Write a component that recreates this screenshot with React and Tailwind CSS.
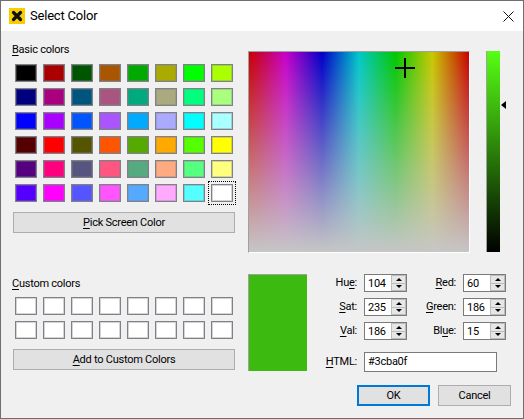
import React from 'react';

const basicColors = [
  '#000000', '#aa0000', '#005500', '#aa5500', '#00aa00', '#aaaa00', '#00ff00', '#aaff00',
  '#00007f', '#aa007f', '#00557f', '#aa557f', '#00aa7f', '#aaaa7f', '#00ff7f', '#aaff7f',
  '#0000ff', '#aa00ff', '#0055ff', '#aa55ff', '#00aaff', '#aaaaff', '#00ffff', '#aaffff',
  '#550000', '#ff0000', '#555500', '#ff5500', '#55aa00', '#ffaa00', '#55ff00', '#ffff00',
  '#55007f', '#ff007f', '#55557f', '#ff557f', '#55aa7f', '#ffaa7f', '#55ff7f', '#ffff7f',
  '#5500ff', '#ff00ff', '#5555ff', '#ff55ff', '#55aaff', '#ffaaff', '#55ffff', '#ffffff',
];

function Swatch({ color, focused }) {
  return (
    <div className={`w-[22px] h-[18px] border border-[#808088] shadow-[inset_0_0_0_1px_rgba(128,128,136,0.35)] ${focused ? 'outline-dotted outline-1 outline-offset-[2px] outline-black' : ''}`} style={{ backgroundColor: color }} />
  );
}

function Mnemonic({ first, rest, before = '' }) {
  return <span>{before}<span className="underline underline-offset-2">{first}</span>{rest}</span>;
}

function PushButton({ children, className = '' }) {
  return (
    <div className={`h-[21px] pt-[1px] flex items-center justify-center bg-[#e1e1e1] border ${className}`}>
      {children}
    </div>
  );
}

function Spin({ value }) {
  return (
    <div className="w-[43px] h-[18px] bg-white border border-[#7a7a7a] flex items-center">
      <span className="flex-1 pl-[3px] leading-none">{value}</span>
      <div className="w-[15px] h-[16px] flex flex-col">
        <div className="flex-1 flex items-center justify-center bg-[#e6e6e6] border border-[#bcbcbc]">
          <div className="w-0 h-0 border-x-[3px] border-x-transparent border-b-[3px] border-b-black" />
        </div>
        <div className="flex-1 flex items-center justify-center bg-[#e6e6e6] border border-t-0 border-[#bcbcbc]">
          <div className="w-0 h-0 border-x-[3px] border-x-transparent border-t-[3px] border-t-black" />
        </div>
      </div>
    </div>
  );
}

function Field({ label, value, width }) {
  return (
    <div className="flex items-center h-[18px] gap-[7px]">
      <div className={`${width} text-right`}>{label}</div>
      <Spin value={value} />
    </div>
  );
}

export default function App() {
  return (
    <div className="w-[524px] h-[419px] bg-[#f0f0f0] border border-[#6f6f6f] flex flex-col text-[11px] tracking-[-0.25px] text-black font-['Roboto',sans-serif]">
      {/* title bar */}
      <div className="h-[30px] bg-white flex items-center pl-[8px] pr-[9px] shrink-0">
        <svg width="16" height="16" viewBox="0 0 16 16" className="shrink-0">
          <rect width="16" height="16" fill="#f7cf00" />
          <path d="M4.5 4.5 L11.5 11.5 M11.5 4.5 L4.5 11.5" stroke="#111" strokeWidth="3.2" strokeLinecap="round" />
        </svg>
        <span className="ml-[5px] text-[13px] tracking-[-0.2px]">Select Color</span>
        <svg width="11" height="11" viewBox="0 0 11 11" className="ml-auto">
          <path d="M0.5 0.5 L10.5 10.5 M10.5 0.5 L0.5 10.5" stroke="#111" strokeWidth="1" fill="none" />
        </svg>
      </div>

      <div className="flex-1 flex pl-[11px] min-h-0">
        {/* left column */}
        <div className="w-[223px] shrink-0 flex flex-col">
          <div className="h-[17px] mt-[10px] leading-[17px]"><Mnemonic first="B" rest="asic colors" /></div>
          <div className="grid grid-cols-[repeat(8,22px)] auto-rows-[18px] gap-[6px] ml-[3px] mt-[6px]">
            {basicColors.map((c, i) => <Swatch key={i} color={c} focused={i === 47} />)}
          </div>
          <PushButton className="ml-[1px] mt-[10px] border-[#adadad]"><Mnemonic first="P" rest="ick Screen Color" /></PushButton>

          <div className="h-[17px] mt-[42px] leading-[17px]"><Mnemonic first="C" rest="ustom colors" /></div>
          <div className="grid grid-cols-[repeat(8,22px)] auto-rows-[18px] gap-[6px] ml-[3px] mt-[5px]">
            {Array.from({ length: 16 }).map((_, i) => <Swatch key={i} color="#ffffff" />)}
          </div>
          <PushButton className="ml-[1px] mt-[10px] border-[#adadad]"><Mnemonic first="A" rest="dd to Custom Colors" /></PushButton>
        </div>

        {/* right column */}
        <div className="flex-1 ml-[13px] flex flex-col">
          <div className="flex mt-[20px]">
            <div className="relative w-[222px] h-[202px] border-t border-l border-t-[#a0a0a0] border-l-[#a0a0a0] border-r border-b border-r-white border-b-white bg-[linear-gradient(to_bottom,rgba(198,198,198,0),#c6c6c6),linear-gradient(to_right,#c80000,#c800c8,#0000c8,#00c8c8,#00c800,#c8c800,#c80000)]">
              <div className="absolute left-[146px] top-[15px] w-[20px] h-[2px] bg-black" />
              <div className="absolute left-[155px] top-[6px] w-[2px] h-[20px] bg-black" />
            </div>
            <div className="relative ml-[16px] w-[14px] h-[201px] border-l border-l-[#a0a0a0] bg-[linear-gradient(to_bottom,#56ff14,#000000)]">
              <div className="absolute left-[14px] top-[50px] w-0 h-0 border-y-[4px] border-y-transparent border-r-[5px] border-r-black" />
            </div>
          </div>

          <div className="flex mt-[21px]">
            <div className="w-[59px] h-[97px] bg-[#3cba0f] border-t border-l border-t-[#a0a0a0] border-l-[#a0a0a0]" />
            <div className="flex flex-col ml-[12px]">
              <div className="grid grid-cols-[auto_auto] gap-x-[13px] gap-y-[6px] justify-start">
                <Field label={<Mnemonic before="Hu" first="e" rest=":" />} value="104" width="w-[38px]" />
                <Field label={<Mnemonic first="R" rest="ed:" />} value="60" width="w-[36px]" />
                <Field label={<Mnemonic first="S" rest="at:" />} value="235" width="w-[38px]" />
                <Field label={<Mnemonic first="G" rest="reen:" />} value="186" width="w-[36px]" />
                <Field label={<Mnemonic first="V" rest="al:" />} value="186" width="w-[38px]" />
                <Field label={<Mnemonic before="Bl" first="u" rest="e:" />} value="15" width="w-[36px]" />
              </div>
              <div className="flex items-center gap-[7px] mt-[12px]">
                <div className="w-[38px] text-right"><Mnemonic first="H" rest="TML:" /></div>
                <div className="w-[133px] h-[20px] bg-white border border-[#7a7a7a] pl-[3px] flex items-center">#3cba0f</div>
              </div>
            </div>
          </div>

          <div className="flex justify-end gap-[8px] mt-[13px] pr-[12px]">
            <PushButton className="w-[73px] border-2 border-[#0078d7]">OK</PushButton>
            <PushButton className="w-[73px] border-[#adadad]">Cancel</PushButton>
          </div>
        </div>
      </div>
    </div>
  );
}
